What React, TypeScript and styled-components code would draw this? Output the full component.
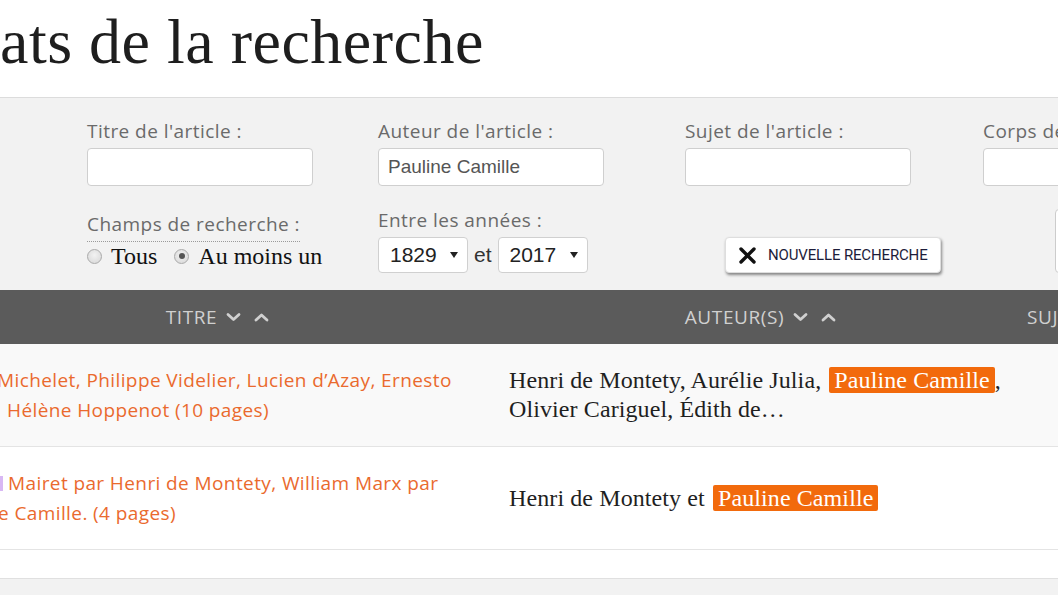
import React from "react";
import styled, { createGlobalStyle } from "styled-components";

const GlobalStyle = createGlobalStyle`
  html, body { margin: 0; padding: 0; background: #ffffff; overflow: hidden; }
  body { font-family: "Open Sans", "Noto Sans", sans-serif; }
  #root { width: 1058px; height: 595px; overflow: hidden; }
`;

const Page = styled.div`
  width: 1058px;
  height: 595px;
  overflow: hidden;
  background: #f2f2f2;
  display: flex;
  flex-direction: column;
`;

const TitleBar = styled.header`
  height: 98px;
  box-sizing: border-box;
  padding-top: 10px;
  background: #ffffff;
  border-bottom: 1px solid #dcdcdc;
  flex-shrink: 0;
`;

const Title = styled.h1`
  margin: 0;
  font-family: "Liberation Serif", "Times New Roman", serif;
  font-weight: 400;
  font-size: 64px;
  line-height: 64px;
  letter-spacing: 0.5px;
  color: #1e1e1e;
  white-space: nowrap;
`;

const SearchPanel = styled.section`
  height: 192px;
  box-sizing: border-box;
  padding: 21px 0 0 87px;
  background: #f2f2f2;
  flex-shrink: 0;
`;

const FormGrid = styled.div`
  display: grid;
  grid-template-columns: 291px 307px 298px 226px;
  row-gap: 22px;
`;

const Field = styled.div`
  display: flex;
  flex-direction: column;
  align-items: flex-start;
  gap: 5px;
`;

const Label = styled.label<{ $dotted?: boolean }>`
  display: block;
  font-size: 19px;
  line-height: 24px;
  letter-spacing: 0.45px;
  color: #6a6a6a;
  white-space: nowrap;
  ${(p) =>
    p.$dotted &&
    `
    margin-top: 4px;
    padding-bottom: 5px;
    border-bottom: 1px dotted #9a9a9a;
  `}
`;

const TextInput = styled.input`
  width: 226px;
  height: 38px;
  box-sizing: border-box;
  border: 1px solid #cfcfcf;
  border-radius: 4px;
  background: #ffffff;
  padding: 0 9px;
  font-family: "Liberation Sans", Arial, sans-serif;
  font-size: 19px;
  color: #555555;
  outline: none;
`;

const RadioRow = styled.div`
  display: flex;
  align-items: center;
  height: 28px;
  margin-top: -5px;
`;

const RadioOption = styled.span`
  display: inline-flex;
  align-items: center;
  gap: 9px;
  margin-right: 17px;
  font-family: "Liberation Serif", "Times New Roman", serif;
  font-size: 24px;
  line-height: 28px;
  color: #111111;
`;

const RadioDot = styled.span<{ $checked?: boolean }>`
  width: 15px;
  height: 15px;
  box-sizing: border-box;
  border-radius: 50%;
  border: 1px solid #aaaaaa;
  background: radial-gradient(circle at 50% 40%, #f2f2f2 0%, #d6d6d6 100%);
  display: inline-flex;
  align-items: center;
  justify-content: center;
  &::after {
    content: "";
    width: 6px;
    height: 6px;
    border-radius: 50%;
    background: ${(p) => (p.$checked ? "#555555" : "transparent")};
  }
`;

const RangeRow = styled.div`
  display: flex;
  align-items: center;
`;

const YearSelect = styled.div`
  display: inline-flex;
  align-items: center;
  justify-content: space-between;
  width: 90px;
  height: 36px;
  box-sizing: border-box;
  padding: 0 9px 0 11px;
  border: 1px solid #d0d0d0;
  border-radius: 4px;
  background: #ffffff;
  font-family: "Liberation Sans", Arial, sans-serif;
  font-size: 21px;
  color: #222222;
`;

const Conj = styled.span`
  margin: 0 6px;
  font-family: "Liberation Sans", Arial, sans-serif;
  font-size: 21px;
  color: #333333;
`;

const ButtonCell = styled.div<{ $inset: number }>`
  display: flex;
  align-items: flex-end;
  padding-left: ${(p) => p.$inset}px;
`;

const ResetButton = styled.button`
  display: inline-flex;
  align-items: center;
  gap: 11px;
  width: 216px;
  height: 36px;
  box-sizing: border-box;
  padding: 0 12px;
  background: #ffffff;
  border: 1px solid #dedede;
  border-radius: 4px;
  box-shadow: 1px 2px 3px rgba(0, 0, 0, 0.45);
  font-family: Roboto, "Open Sans", sans-serif;
  font-size: 15px;
  letter-spacing: -0.15px;
  color: #1d1d3a;
  cursor: pointer;
`;

const SearchBox = styled.div`
  width: 60px;
  height: 64px;
  box-sizing: border-box;
  background: #ffffff;
  border: 1px solid #cccccc;
  border-radius: 4px;
`;

const HeadRow = styled.div`
  display: grid;
  grid-template-columns: 490px 537px 1fr;
  height: 54px;
  background: #5b5b5b;
  flex-shrink: 0;
`;

const HeadCell = styled.div<{ $align?: string; $padLeft?: number; $padRight?: number }>`
  display: flex;
  align-items: center;
  justify-content: ${(p) => p.$align || "center"};
  padding-left: ${(p) => p.$padLeft || 0}px;
  padding-right: ${(p) => p.$padRight || 0}px;
  font-size: 19px;
  letter-spacing: 0.6px;
  color: #d0d0d0;
  white-space: nowrap;
`;

const SortIcons = styled.span`
  display: inline-flex;
  align-items: center;
  gap: 13px;
  margin-left: 9px;
`;

const Row = styled.div<{ $bg: string }>`
  display: grid;
  grid-template-columns: 490px 537px 1fr;
  height: 103px;
  box-sizing: border-box;
  background: ${(p) => p.$bg};
  border-bottom: 1px solid #e4e4e4;
  flex-shrink: 0;
`;

const TitleCell = styled.div`
  display: flex;
  flex-direction: column;
  justify-content: center;
  font-size: 19px;
  line-height: 30px;
  letter-spacing: 0.4px;
  color: #ea6a2e;
  white-space: nowrap;
  overflow: hidden;
`;

const Line = styled.span<{ $indent: number }>`
  display: block;
  margin-left: ${(p) => p.$indent}px;
`;

const Sliver = styled.span`
  display: inline-block;
  width: 3px;
  height: 15px;
  margin-right: 5px;
  vertical-align: -1px;
  background: #d8b8f4;
`;

const AuthorCell = styled.div`
  display: flex;
  align-items: center;
  padding-left: 19px;
  font-family: "Liberation Serif", "Times New Roman", serif;
  font-size: 24px;
  line-height: 29px;
  letter-spacing: 0.1px;
  color: #1f1f1f;
  white-space: nowrap;
`;

const Mark = styled.mark`
  background: #f26a0c;
  color: #ffffff;
  border-radius: 2px;
  padding: 0 5px;
  margin-left: 2px;
`;

const EmptyRow = styled.div`
  height: 29px;
  box-sizing: border-box;
  background: #ffffff;
  border-bottom: 1px solid #e0e0e0;
  flex-shrink: 0;
`;

const Footer = styled.div`
  flex: 1;
  background: #f2f2f2;
`;

const Chevron = ({ up }: { up?: boolean }) => (
  <svg width="15" height="10" viewBox="0 0 15 10">
    <polyline
      points={up ? "2,8 7.5,3 13,8" : "2,2.5 7.5,7.5 13,2.5"}
      fill="none"
      stroke="#d0d0d0"
      strokeWidth="2.8"
      strokeLinecap="round"
      strokeLinejoin="round"
    />
  </svg>
);

const Caret = () => (
  <svg width="8" height="6" viewBox="0 0 8 6">
    <polygon points="0,0 8,0 4,6" fill="#222" />
  </svg>
);

const CloseIcon = () => (
  <svg width="19" height="19" viewBox="0 0 19 19">
    <path d="M3 3 L16 16 M16 3 L3 16" stroke="#111" strokeWidth="3.4" strokeLinecap="round" />
  </svg>
);

export default function App() {
  return (
    <>
      <GlobalStyle />
      <Page>
        <TitleBar>
          <Title>ats de la recherche</Title>
        </TitleBar>

        <SearchPanel>
          <FormGrid>
            <Field>
              <Label>Titre de l'article :</Label>
              <TextInput defaultValue="" />
            </Field>
            <Field>
              <Label>Auteur de l'article :</Label>
              <TextInput defaultValue="Pauline Camille" />
            </Field>
            <Field>
              <Label>Sujet de l'article :</Label>
              <TextInput defaultValue="" />
            </Field>
            <Field>
              <Label>Corps de l'article :</Label>
              <TextInput defaultValue="" />
            </Field>

            <Field>
              <Label $dotted>Champs de recherche :</Label>
              <RadioRow>
                <RadioOption>
                  <RadioDot />
                  Tous
                </RadioOption>
                <RadioOption>
                  <RadioDot $checked />
                  Au moins un
                </RadioOption>
              </RadioRow>
            </Field>
            <Field>
              <Label>Entre les années :</Label>
              <RangeRow>
                <YearSelect>
                  1829 <Caret />
                </YearSelect>
                <Conj>et</Conj>
                <YearSelect>
                  2017 <Caret />
                </YearSelect>
              </RangeRow>
            </Field>
            <ButtonCell $inset={40}>
              <ResetButton>
                <CloseIcon />
                NOUVELLE RECHERCHE
              </ResetButton>
            </ButtonCell>
            <ButtonCell $inset={72}>
              <SearchBox />
            </ButtonCell>
          </FormGrid>
        </SearchPanel>

        <HeadRow>
          <HeadCell $padRight={55}>
            TITRE
            <SortIcons>
              <Chevron />
              <Chevron up />
            </SortIcons>
          </HeadCell>
          <HeadCell $padLeft={4}>
            AUTEUR(S)
            <SortIcons>
              <Chevron />
              <Chevron up />
            </SortIcons>
          </HeadCell>
          <HeadCell $align="flex-start">SUJET</HeadCell>
        </HeadRow>

        <Row $bg="#f9f9f9">
          <TitleCell>
            <Line $indent={-3}>Michelet, Philippe Videlier, Lucien d’Azay, Ernesto</Line>
            <Line $indent={7}>Hélène Hoppenot (10 pages)</Line>
          </TitleCell>
          <AuthorCell>
            <div>
              Henri de Montety, Aurélie Julia, <Mark>Pauline Camille</Mark>,
              <br />
              Olivier Cariguel, Édith de…
            </div>
          </AuthorCell>
          <div />
        </Row>

        <Row $bg="#ffffff">
          <TitleCell>
            <Line $indent={0}>
              <Sliver />
              Mairet par Henri de Montety, William Marx par
            </Line>
            <Line $indent={-2}>e Camille. (4 pages)</Line>
          </TitleCell>
          <AuthorCell>
            <div>
              Henri de Montety et <Mark>Pauline Camille</Mark>
            </div>
          </AuthorCell>
          <div />
        </Row>

        <EmptyRow />
        <Footer />
      </Page>
    </>
  );
}
